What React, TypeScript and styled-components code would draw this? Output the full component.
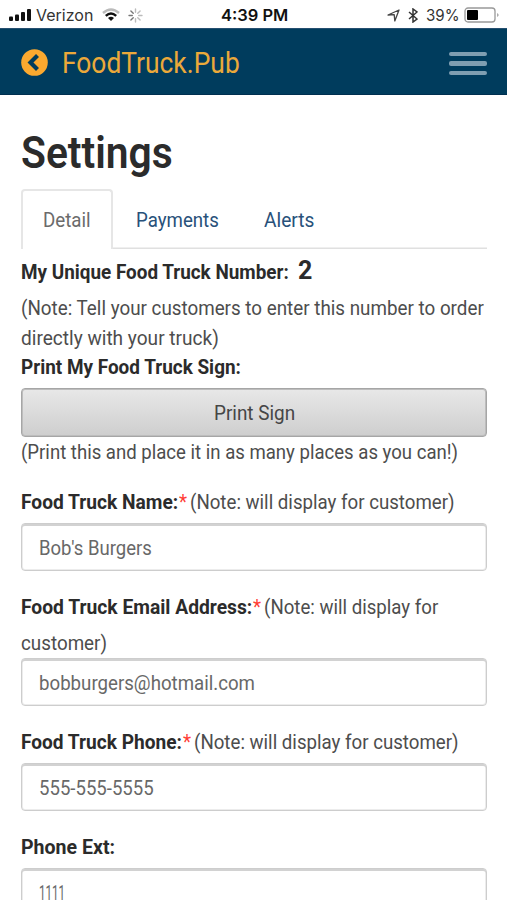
import React, { useLayoutEffect, useRef, useState } from "react";
import styled, { createGlobalStyle } from "styled-components";

const Global = createGlobalStyle`
  * { box-sizing: border-box; }
  html, body { margin: 0; background: #fff; overflow: hidden; }
  body { font-family: Roboto, "Liberation Sans", sans-serif; color: #2b2b2b; }
`;

const Slot = styled.span<{ $width: number }>`
  display: inline-block;
  flex: none;
  width: ${(p) => p.$width}px;
  white-space: pre;
`;
const Stretch = styled.span`
  display: inline-block;
  transform-origin: 0 50%;
`;

/* Condenses a run of text horizontally to a fixed measure. */
function Fit({ w, children }: { w: number; children: string }) {
  const ref = useRef<HTMLSpanElement>(null);
  const [scale, setScale] = useState(1);
  useLayoutEffect(() => {
    if (ref.current) setScale(w / ref.current.offsetWidth);
  }, [w, children]);
  return (
    <Slot $width={w}>
      <Stretch ref={ref} style={{ transform: `scaleX(${scale})` }}>{children}</Stretch>
    </Slot>
  );
}

const Screen = styled.div`
  width: 507px;
  height: 900px;
  overflow: hidden;
  background: #fff;
`;
const StatusBar = styled.div`
  display: grid;
  grid-template-columns: 1fr auto 1fr;
  align-items: center;
  height: 28px;
  padding: 2px 7px 0 9px;
  font-family: Inter, "Liberation Sans", sans-serif;
  font-size: 16px;
  line-height: 26px;
  color: #333;
`;
const StatusGroup = styled.div<{ $end?: boolean }>`
  display: flex;
  align-items: center;
  justify-content: ${(p) => (p.$end ? "flex-end" : "flex-start")};
`;
const Icon = styled.svg<{ $left?: number }>`
  display: block;
  flex: none;
  margin-left: ${(p) => p.$left ?? 0}px;
`;
const Carrier = styled.span`
  margin-left: 4px;
`;
const Clock = styled.span`
  font-weight: 600;
  color: #111;
`;
const Percent = styled.span`
  margin-left: 8px;
`;
const NavBar = styled.header`
  display: flex;
  align-items: center;
  justify-content: space-between;
  height: 67px;
  padding: 2px 20px 0 21px;
  background: #003c5d;
  border-top: 1px solid #264f70;
  border-bottom: 1px solid #002f50;
`;
const Brand = styled.div`
  display: flex;
  align-items: center;
  gap: 14px;
  color: #eba93a;
  font-size: 29.5px;
  line-height: 40px;
`;
const MenuButton = styled.button`
  display: flex;
  flex-direction: column;
  gap: 5px;
  width: 38px;
  margin-top: 2px;
  padding: 0;
  border: 0;
  background: none;
`;
const MenuBar = styled.span`
  height: 4.5px;
  border-radius: 2px;
  background: #7f9eb1;
`;
const Content = styled.main`
  padding: 0 20px 0 21px;
  font-size: 21px;
`;
const Title = styled.h1`
  margin: 0;
  padding-top: 30px;
  height: 94px;
  font-size: 44px;
  line-height: 56px;
  font-weight: 600;
  color: #2b2b2b;
`;
const Tabs = styled.nav`
  display: flex;
  height: 60px;
  box-shadow: inset 0 -1.5px #e0e0e0;
`;
const Tab = styled.div<{ $active?: boolean }>`
  height: 60px;
  padding: ${(p) => (p.$active ? "1px 20px 0 20px" : "3px 22px 0 23px")};
  line-height: 57px;
  font-size: 20.7px;
  color: ${(p) => (p.$active ? "#6b6b6b" : "#28517a")};
  border: ${(p) => (p.$active ? "2px solid #e6e6e6" : "0 solid transparent")};
  border-bottom: 0;
  border-radius: 4px 4px 0 0;
  background: ${(p) => (p.$active ? "#fff" : "transparent")};
`;
const Line = styled.div<{ $height: number; $bold?: boolean }>`
  display: flex;
  height: ${(p) => p.$height}px;
  line-height: ${(p) => p.$height}px;
  align-items: baseline;
  font-weight: ${(p) => (p.$bold ? 700 : 400)};
  color: ${(p) => (p.$bold ? "#2b2b2b" : "#4d4d4d")};
`;
const TruckNumber = styled.span`
  margin-left: 9px;
  font-size: 25px;
`;
const PrintButton = styled.button`
  display: flex;
  align-items: center;
  justify-content: center;
  width: 100%;
  height: 49px;
  margin: 6px 0 0;
  padding: 1px 0 0;
  border: 1px solid #a6a6a6;
  border-radius: 4px;
  background: linear-gradient(#e8e8e8, #cecece);
  box-shadow: inset 0 0 0 1px #bdbdbd;
  color: #464646;
  font: 400 21px Roboto, sans-serif;
`;
const Field = styled.div`
  margin-bottom: 18px;
`;
const Label = styled.label`
  display: flex;
  flex-wrap: wrap;
  align-items: baseline;
  line-height: 36px;
`;
const Name = styled.span`
  font-weight: 700;
  color: #2b2b2b;
`;
const Star = styled.span`
  margin: 0 3px 0 1px;
  color: #ff3c35;
`;
const Note = styled.span`
  color: #4d4d4d;
`;
const InputBox = styled.div<{ $tight?: boolean }>`
  height: 48px;
  margin-top: ${(p) => (p.$tight ? -3 : 3)}px;
  padding: 1px 0 0 17px;
  border: 1px solid #cdcdcd;
  border-radius: 4px;
  background: #fff;
  box-shadow: inset 0 2px #d2d2d2, inset 0 0 0 1px #ececec;
  line-height: 46px;
  color: #686868;
`;

type FieldData = {
  label: string; labelWidth: number;
  notes?: [string, number][];
  value: string; valueWidth: number;
};
const fields: FieldData[] = [
  { label: "Food Truck Name:", labelWidth: 157, notes: [["(Note: will display for customer)", 265]], value: "Bob's Burgers", valueWidth: 113 },
  { label: "Food Truck Email Address:", labelWidth: 231, notes: [["(Note: will display for", 174], ["customer)", 86]], value: "bobburgers@hotmail.com", valueWidth: 216 },
  { label: "Food Truck Phone:", labelWidth: 161, notes: [["(Note: will display for customer)", 265]], value: "555-555-5555", valueWidth: 115 },
  { label: "Phone Ext:", labelWidth: 94, value: "1111", valueWidth: 26 },
];

const spokes = [0, 45, 90, 135, 180, 225, 270, 315];

export default function App() {
  return (
    <Screen>
      <Global />
      <StatusBar>
        <StatusGroup>
          <Icon width="23" height="14" viewBox="0 0 23 14" fill="#111">
            <rect x="0" y="8.5" width="4" height="4.5" rx="1" />
            <rect x="6" y="6.5" width="4" height="6.5" rx="1" />
            <rect x="12" y="4" width="4" height="9" rx="1" />
            <rect x="18" y="1" width="4" height="12" rx="1" />
          </Icon>
          <Carrier><Fit w={57}>Verizon</Fit></Carrier>
          <Icon $left={9} width="18" height="14" viewBox="0 0 18 14" fill="none" strokeWidth="2.4">
            <path d="M1 5 Q9 -2 17 5" stroke="#bbb" />
            <path d="M3.8 7.8 Q9 3 14.2 7.8" stroke="#111" />
            <path d="M6 10 Q9 7.3 12 10 L9 13Z" fill="#111" />
          </Icon>
          <Icon $left={8} width="15" height="15" viewBox="0 0 15 15" strokeWidth="1.4" strokeLinecap="round">
            {spokes.map((a, i) => (
              <path key={a} d="M7.5 1V4.3" stroke={i > 4 ? "#777" : "#bbb"} transform={`rotate(${a} 7.5 7.5)`} />
            ))}
          </Icon>
        </StatusGroup>
        <Clock><Fit w={67}>4:39 PM</Fit></Clock>
        <StatusGroup $end>
          <Icon width="13" height="13" viewBox="0 0 13 13" fill="none" stroke="#444" strokeWidth="1.3" strokeLinejoin="round">
            <path d="M1 6 L12 1 L7.8 12 L7.2 5.6Z" />
          </Icon>
          <Icon $left={8} width="10" height="15" viewBox="0 0 10 15" fill="none" stroke="#333" strokeWidth="1.5">
            <path d="M1 4 L9 11 L5 14 V1 L9 4 L1 11" />
          </Icon>
          <Percent><Fit w={34}>39%</Fit></Percent>
          <Icon $left={4} width="36" height="16" viewBox="0 0 36 16">
            <rect x="1" y="1" width="30" height="14" rx="3" fill="#fff" stroke="#999" strokeWidth="1.3" />
            <rect x="3" y="3" width="11" height="10" rx="1" fill="#000" />
            <path d="M33.2 6 Q36 8 33.2 10Z" fill="#999" />
          </Icon>
        </StatusGroup>
      </StatusBar>
      <NavBar>
        <Brand>
          <Icon width="27" height="27" viewBox="0 0 27 27">
            <circle cx="13.5" cy="13.5" r="13.3" fill="#fba92f" />
            <path d="M16.5 6.5 L9.5 13.5 L16.5 20.5" fill="none" stroke="#003c5d" strokeWidth="4.2" />
          </Icon>
          <Fit w={178}>FoodTruck.Pub</Fit>
        </Brand>
        <MenuButton aria-label="Menu"><MenuBar /><MenuBar /><MenuBar /></MenuButton>
      </NavBar>
      <Content>
        <Title><Fit w={152}>Settings</Fit></Title>
        <Tabs>
          <Tab $active><Fit w={48}>Detail</Fit></Tab>
          <Tab><Fit w={83}>Payments</Fit></Tab>
          <Tab><Fit w={50}>Alerts</Fit></Tab>
        </Tabs>
        <Line $height={44} $bold>
          <Fit w={268}>My Unique Food Truck Number:</Fit>
          <TruckNumber><Fit w={14}>2</Fit></TruckNumber>
        </Line>
        <Line $height={30}><Fit w={463}>(Note: Tell your customers to enter this number to order</Fit></Line>
        <Line $height={30}><Fit w={198}>directly with your truck)</Fit></Line>
        <Line $height={29} $bold><Fit w={220}>Print My Food Truck Sign:</Fit></Line>
        <PrintButton><Fit w={81}>Print Sign</Fit></PrintButton>
        <Line $height={30}><Fit w={437}>(Print this and place it in as many places as you can!)</Fit></Line>
        <Line $height={17}>{null}</Line>
        {fields.map((f) => (
          <Field key={f.label}>
            <Label>
              <Name><Fit w={f.labelWidth}>{f.label}</Fit></Name>
              {f.notes && <Star><Fit w={8}>*</Fit></Star>}
              {f.notes?.map(([text, w]) => <Note key={text}><Fit w={w}>{text}</Fit></Note>)}
            </Label>
            <InputBox $tight={!!f.notes && f.notes.length > 1}><Fit w={f.valueWidth}>{f.value}</Fit></InputBox>
          </Field>
        ))}
      </Content>
    </Screen>
  );
}
